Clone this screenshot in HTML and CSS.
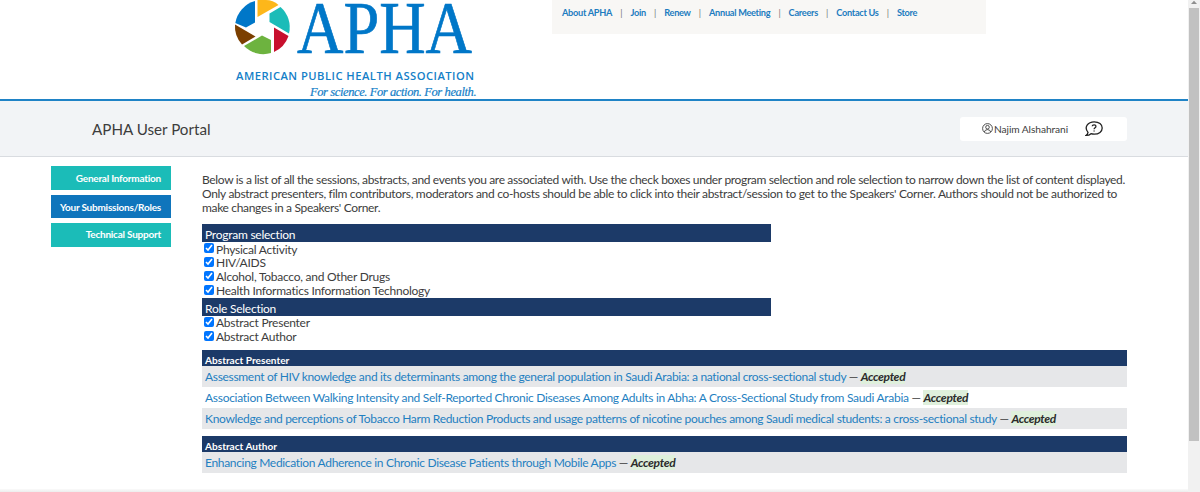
FILE: index.html
```html
<!DOCTYPE html>
<html lang="en">
<head>
<meta charset="utf-8">
<title>APHA User Portal</title>
<link rel="stylesheet" href="styles.css">
</head>
<body>
<div class="page">
  <header class="masthead">
    <svg class="logo" width="250" height="99" viewBox="230 0 250 99" role="img" aria-label="APHA">
      <path fill="#0077c8" d="M255 1A27.500 27.500 0 0 0 235.300 23L246 27.500L255 22.500Z"/>
      <path fill="#fdb71a" d="M257.500 0H266Q273 0 278.500 5L257.500 17Z"/>
      <path fill="#1bbcb8" d="M280.500 7A27 27 0 0 1 289 33.500L269.500 22V13.500Z"/>
      <path fill="#c8102e" d="M274 27.500L288.500 36A27 27 0 0 1 274 52Z"/>
      <path fill="#6db33f" d="M262 35.500L271 40V53A27 27 0 0 1 244 46Z"/>
      <path fill="#7b3f00" d="M235 24.500L255.500 36.500L242 44.500A27 27 0 0 1 235 24.500Z"/>
      <text class="logo-word" x="297" y="52.500" textLength="175" lengthAdjust="spacingAndGlyphs">APHA</text>
      <text class="logo-name" x="236" y="79.500" textLength="238">AMERICAN PUBLIC HEALTH ASSOCIATION</text>
      <text class="logo-tag" x="310" y="96" textLength="166.500">For science. For action. For health.</text>
    </svg>
    <nav class="topnav">
      <a>About APHA</a><i>|</i><a>Join</a><i>|</i><a>Renew</a><i>|</i><a>Annual Meeting</a><i>|</i><a>Careers</a><i>|</i><a>Contact Us</a><i>|</i><a>Store</a>
    </nav>
  </header>
  <div class="titlebar">
    <h1>APHA User Portal</h1>
    <div class="user">
      <svg class="user-icon" width="11" height="11" viewBox="0 0 11 11" fill="none" stroke="#3c3c3c" stroke-width=".9"><circle cx="5.500" cy="5.500" r="4.900"/><circle cx="5.500" cy="4.200" r="1.800"/><path d="M2.300 9Q3 6.600 5.500 6.600T8.700 9"/></svg>
      <span>Najim Alshahrani</span>
      <svg class="help-icon" width="18" height="16" viewBox="0 0 18 16" fill="none" stroke="#222" stroke-width="1.300"><path d="M3 11.300C-1.400 6 3 .8 9.200.8C14 .8 17.200 3.500 17.200 7S14 13.200 9.200 13.200Q7.500 13.200 6 12.700Q4 14.500 1 14.400Q2.800 13 3 11.300Z"/><path d="M7.200 5.300Q7.300 3.800 9.100 3.800T10.900 5.400C10.900 6.800 9.100 6.700 9.100 8.300M9.100 9.400V10.600"/></svg>
    </div>
  </div>
  <div class="body">
    <aside class="side">
      <a class="side-link">General Information</a>
      <a class="side-link current">Your Submissions/Roles</a>
      <a class="side-link">Technical Support</a>
    </aside>
    <main class="main">
      <p class="intro">Below is a list of all the sessions, abstracts, and events you are associated with. Use the check boxes under program selection and role selection to narrow down the list of content displayed.<br><span class="loose">Only abstract presenters, film contributors, moderators and co-hosts should be able to click into their abstract/session to get to the Speakers' Corner. Authors should not be authorized to</span><br>make changes in a Speakers' Corner.</p>
      <div class="filters">
        <h2>Program selection</h2>
        <label><input type="checkbox" checked>Physical Activity</label>
        <label><input type="checkbox" checked>HIV/AIDS</label>
        <label><input type="checkbox" checked>Alcohol, Tobacco, and Other Drugs</label>
        <label><input type="checkbox" checked>Health Informatics Information Technology</label>
        <h2>Role Selection</h2>
        <label><input type="checkbox" checked>Abstract Presenter</label>
        <label><input type="checkbox" checked>Abstract Author</label>
      </div>
      <section class="roles">
        <h3>Abstract Presenter</h3>
        <div class="row"><a>Assessment of HIV knowledge and its determinants among the general population in Saudi Arabia: a national cross-sectional study</a> — <em>Accepted</em></div>
        <div class="row plain"><a>Association Between Walking Intensity and Self-Reported Chronic Diseases Among Adults in Abha: A Cross-Sectional Study from Saudi Arabia</a> — <em>Accepted</em></div>
        <div class="row"><a>Knowledge and perceptions of Tobacco Harm Reduction Products and usage patterns of nicotine pouches among Saudi medical students: a cross-sectional study</a> — <em>Accepted</em></div>
      </section>
      <section class="roles">
        <h3>Abstract Author</h3>
        <div class="row"><a>Enhancing Medication Adherence in Chronic Disease Patients through Mobile Apps</a> — <em>Accepted</em></div>
      </section>
    </main>
  </div>
  <div class="page-end"></div>
</div>
<div class="scrollbar">
  <svg width="12" height="8" viewBox="0 0 12 8"><path fill="#8f8f8f" d="M3 4L6 .8L9 4Z"/></svg>
  <div class="thumb"></div>
</div>
</body>
</html>
```
FILE: styles.css
```css
* { box-sizing: border-box; }
body { margin: 0; width: 1200px; height: 492px; overflow: hidden; display: flex; background: #fff; color: #3d3d3d; font: 12px/13.8px Lato, "Liberation Sans", sans-serif; font-variant-ligatures: none; letter-spacing: -.335px; }
.page { width: 1188px; height: 492px; display: flex; flex-direction: column; }
.masthead { height: 101px; flex: none; display: flex; align-items: flex-start; padding-left: 230px; border-bottom: 2px solid #1f83c6; }
.logo { display: block; letter-spacing: 0; }
.logo-word { font: 73px "Liberation Serif", serif; fill: #0077c8; stroke: #0077c8; stroke-width: .7px; }
.logo-name { font: 600 11.2px "Open Sans", sans-serif; fill: #1480c8; }
.logo-tag { font: italic 12.5px "Liberation Serif", serif; fill: #1480c8; stroke: #1480c8; stroke-width: .2px; }
.topnav { width: 434px; height: 34px; margin-left: 72px; padding: 6px 0 0 10px; display: flex; background: #f8f7f5; color: #1d7cc0; font-size: 9.2px; letter-spacing: -.28px; font-weight: 700; white-space: nowrap; }
.topnav i { width: 18.300px; text-align: center; color: #777; font-style: normal; font-weight: 400; }
.titlebar { height: 56px; flex: none; display: flex; align-items: center; justify-content: space-between; padding: 0 61px 0 92px; background: #f2f4f6; border-bottom: 1px solid #d9dce0; }
.titlebar h1 { margin: 0; font-size: 15.2px; line-height: 20px; font-weight: 400; letter-spacing: 0; }
.user { width: 167px; height: 24px; display: flex; align-items: center; padding-left: 22px; background: #fff; border-radius: 3px; font-size: 10.2px; letter-spacing: -.07px; white-space: nowrap; }
.user span { padding-top: 2px; }
.user-icon { margin-right: 1px; }
.help-icon { margin-left: 17px; }
.body { flex: 1; display: flex; padding: 9px 0 0 51px; }
.side { width: 120px; margin-right: 31px; display: flex; flex-direction: column; gap: 5px; }
.side-link { height: 23.500px; padding-right: 10px; background: #1bbcb8; color: #fff; font-size: 10px; letter-spacing: -.23px; line-height: 24px; font-weight: 700; text-align: right; white-space: nowrap; }
.side-link:last-child { line-height: 23px; }
.current { background: #0f75bc; }
.main { width: 925px; white-space: nowrap; }
.intro { margin: 7px 0 9.600px; }
.loose { letter-spacing: -.315px; }
.filters { width: 569px; margin-bottom: 6.500px; letter-spacing: -.25px; }
.filters h2 { height: 18px; margin: 0; padding: 4px 3px 0; background: #1c3a68; color: #fff; font-size: 12px; line-height: 14px; font-weight: 400; }
.filters label { height: 13.900px; display: flex; align-items: center; padding: 1px 0 0 2px; }
.filters input { width: 10px; height: 10px; margin: 0 2px 2px 0; accent-color: #0075ff; }
.roles { margin-bottom: 7px; }
.roles h3 { height: 16px; margin: 0; padding: 4px 3px 0; background: #1c3a68; color: #fff; font-size: 10.1px; letter-spacing: 0; line-height: 13px; }
.row { height: 21px; padding: 0 3px; line-height: 22px; background: #e6e7e9; letter-spacing: -.32px; }
.plain { background: #fff; letter-spacing: -.29px; }
.row a { color: #1f7fc1; }
.row em { background: #dff0dc; color: #2b2b2b; font-weight: 700; }
.page-end { height: 3px; flex: none; background: linear-gradient(#fafafa, #ededed); }
.scrollbar { width: 12px; height: 492px; background: #f1f1f1; }
.scrollbar svg { display: block; }
.thumb { width: 10px; height: 433px; margin-left: 1px; background: #c1c1c1; }
```
